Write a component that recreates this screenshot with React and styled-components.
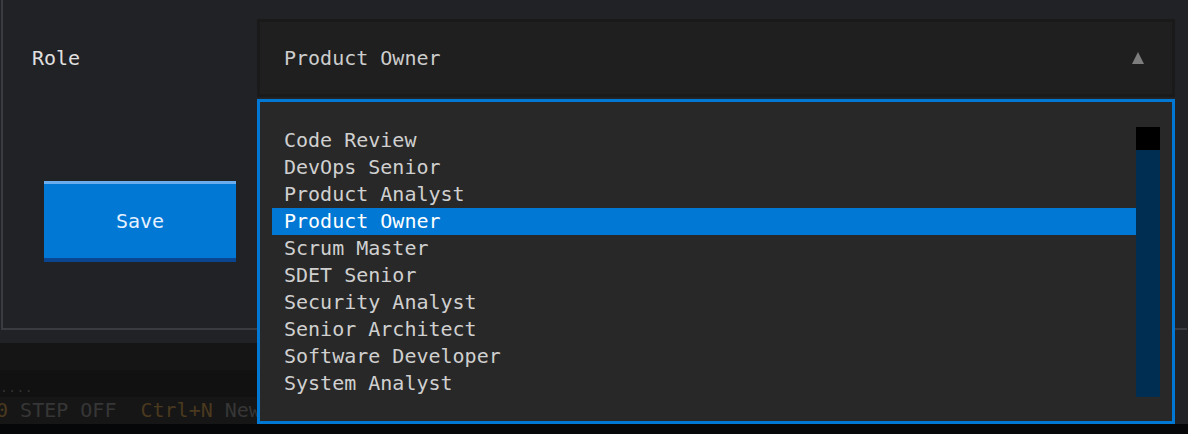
import React from 'react';
import styled, { createGlobalStyle } from 'styled-components';

const roles = [
  'Code Review',
  'DevOps Senior',
  'Product Analyst',
  'Product Owner',
  'Scrum Master',
  'SDET Senior',
  'Security Analyst',
  'Senior Architect',
  'Software Developer',
  'System Analyst',
];

const GlobalStyle = createGlobalStyle`
  html, body {
    margin: 0;
    padding: 0;
    background: #212226;
    overflow: hidden;
  }
  body {
    font-family: "DejaVu Sans Mono", "Liberation Mono", monospace;
    font-size: 20px;
  }
`;

const App = () => {
  const selected = 'Product Owner';

  return (
    <Page>
      <GlobalStyle />
      <Panel>
        <FormRow>
          <Label>Role</Label>
          <SelectBox>
            <SelectValue>{selected}</SelectValue>
            <Arrow />
          </SelectBox>
        </FormRow>
        <SaveButton>Save</SaveButton>
      </Panel>

      <StatusArea>
        <StatusRow />
        <StatusRow $tone="#111111">
          <Dots>....</Dots>
        </StatusRow>
        <StatusRow $tone="#161616">
          <StatusLine>
            <Key>0</Key> STEP OFF  <Key>Ctrl+N</Key> New Item
          </StatusLine>
        </StatusRow>
      </StatusArea>
      <BottomStrip />

      <Dropdown>
        <OptionList>
          {roles.map((role) => (
            <Option key={role} $active={role === selected}>
              {role}
            </Option>
          ))}
        </OptionList>
        <Scrollbar>
          <Thumb />
        </Scrollbar>
      </Dropdown>
    </Page>
  );
};

const Page = styled.div`
  position: relative;
  width: 1188px;
  height: 434px;
  overflow: hidden;
  background: #212226;
`;

const Panel = styled.div`
  margin-left: 1px;
  width: 1184px;
  height: 328px;
  box-sizing: content-box;
  border-left: 2px solid #3a3b40;
  border-bottom: 2px solid #3a3b40;
  display: flex;
  flex-direction: column;
`;

const FormRow = styled.div`
  display: flex;
  align-items: center;
  padding-top: 19px;
`;

const Label = styled.div`
  width: 254px;
  padding-left: 29px;
  box-sizing: border-box;
  color: #e0e0e0;
`;

const SelectBox = styled.div`
  width: 918px;
  height: 78px;
  box-sizing: border-box;
  border: 3px solid #1a1a1a;
  background: #1f1f1f;
  display: flex;
  align-items: center;
  justify-content: space-between;
  padding: 0 28px 0 24px;
`;

const SelectValue = styled.span`
  color: #cdcdcd;
`;

const Arrow = styled.span`
  width: 0;
  height: 0;
  border-left: 6px solid transparent;
  border-right: 6px solid transparent;
  border-bottom: 12px solid #7d7d7d;
`;

const SaveButton = styled.button`
  margin: 84px 0 0 41px;
  width: 192px;
  height: 81px;
  border: none;
  border-top: 3px solid #6aaef0;
  border-bottom: 4px solid #0a4592;
  background: #0078d4;
  color: #e6f1ff;
  font-family: inherit;
  font-size: 20px;
  padding: 0;
`;

const StatusArea = styled.div`
  margin-top: 13px;
  width: 1175px;
  display: flex;
  flex-direction: column;
`;

const StatusRow = styled.div`
  height: 27px;
  background: ${(p) => p.$tone || '#151515'};
  display: flex;
  align-items: flex-end;
  overflow: hidden;
  white-space: pre;
`;

const Dots = styled.span`
  font-size: 13px;
  color: #343434;
  line-height: 18px;
  letter-spacing: 0.4px;
`;

const StatusLine = styled.span`
  color: #363636;
  line-height: 27px;
  margin-left: -4px;
`;

const Key = styled.span`
  color: #4a391e;
`;

const BottomStrip = styled.div`
  height: 11px;
  background: #060709;
`;

const Dropdown = styled.div`
  position: absolute;
  left: 257px;
  top: 99px;
  width: 918px;
  height: 325px;
  box-sizing: border-box;
  border: 3px solid #0078d4;
  background: #282828;
  display: flex;
  padding: 25px 12px 24px 12px;
`;

const OptionList = styled.ul`
  flex: 1;
  margin: 0;
  padding: 0;
  list-style: none;
`;

const Option = styled.li`
  height: 27px;
  line-height: 27px;
  padding-left: 12px;
  color: ${(p) => (p.$active ? '#ffffff' : '#d0d0d0')};
  background: ${(p) => (p.$active ? '#0078d4' : 'transparent')};
`;

const Scrollbar = styled.div`
  width: 24px;
  height: 270px;
  background: #002e52;
`;

const Thumb = styled.div`
  height: 23px;
  background: #000000;
`;

export default App;
